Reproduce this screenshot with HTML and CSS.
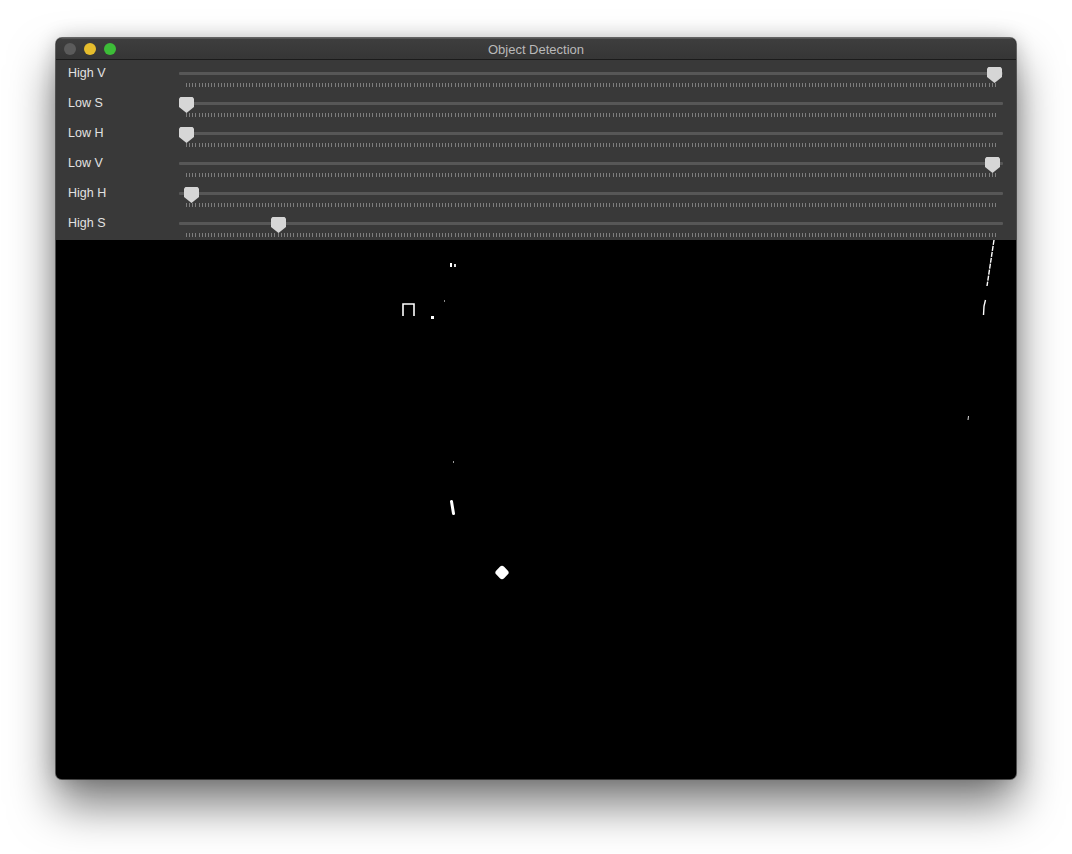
FILE: index.html
```html
<!DOCTYPE html>
<html lang="en">
<head>
<meta charset="utf-8">
<title>Object Detection</title>
<link rel="stylesheet" href="styles.css">
</head>
<body>
<div class="window">
  <div class="titlebar">
    <div class="lights">
      <span class="light light-close"></span>
      <span class="light light-min"></span>
      <span class="light light-max"></span>
    </div>
    <div class="title">Object Detection</div>
  </div>
  <div class="panel">
    <div class="row">
      <div class="label">High V</div>
      <div class="slider"><div class="track"></div><div class="ticks"></div><div class="thumb" style="left:808px"></div></div>
    </div>
    <div class="row">
      <div class="label">Low S</div>
      <div class="slider"><div class="track"></div><div class="ticks"></div><div class="thumb" style="left:0px"></div></div>
    </div>
    <div class="row">
      <div class="label">Low H</div>
      <div class="slider"><div class="track"></div><div class="ticks"></div><div class="thumb" style="left:0px"></div></div>
    </div>
    <div class="row">
      <div class="label">Low V</div>
      <div class="slider"><div class="track"></div><div class="ticks"></div><div class="thumb" style="left:806px"></div></div>
    </div>
    <div class="row">
      <div class="label">High H</div>
      <div class="slider"><div class="track"></div><div class="ticks"></div><div class="thumb" style="left:5px"></div></div>
    </div>
    <div class="row">
      <div class="label">High S</div>
      <div class="slider"><div class="track"></div><div class="ticks"></div><div class="thumb" style="left:92px"></div></div>
    </div>
  </div>
  <div class="canvas">
    <svg class="mask" width="960" height="539" viewBox="0 0 960 539">
      <rect x="394" y="23" width="2" height="4" fill="#fff"/>
      <rect x="398" y="24" width="2" height="3" fill="#ddd"/>
      <path d="M347 76 V64 H358 V76" fill="none" stroke="#fff" stroke-width="1.6"/>
      <rect x="375" y="76" width="3" height="3" fill="#fff"/>
      <rect x="388" y="60" width="1" height="2" fill="#888"/>
      <line x1="938" y1="0" x2="931" y2="46" stroke="#fff" stroke-width="1.4" stroke-dasharray="5 1"/>
      <path d="M929.5 60 L928 66 L927.5 75" fill="none" stroke="#fff" stroke-width="1.4"/>
      <line x1="912.5" y1="176" x2="912" y2="180" stroke="#ddd" stroke-width="1"/>
      <rect x="397" y="221" width="1" height="2" fill="#999"/>
      <line x1="395.5" y1="261.5" x2="397.5" y2="273.5" stroke="#fff" stroke-width="3" stroke-linecap="round"/>
      <rect x="-5.5" y="-5.5" width="11" height="11" rx="3" fill="#fff" transform="translate(446 332.5) rotate(45)"/>
    </svg>
  </div>
</div>
</body>
</html>
```
FILE: styles.css
```css
html, body {
  margin: 0;
  padding: 0;
  background: #ffffff;
}

body {
  width: 1072px;
  height: 854px;
  overflow: hidden;
  font-family: "Liberation Sans", Arial, Helvetica, sans-serif;
}

.window {
  margin: 38px 0 0 56px;
  width: 960px;
  height: 741px;
  display: flex;
  flex-direction: column;
  border-radius: 6px;
  overflow: hidden;
  box-shadow: 0 0 0 1px rgba(0, 0, 0, 0.55), 0 26px 46px rgba(0, 0, 0, 0.52), 0 0 20px rgba(0, 0, 0, 0.2);
  background: #000;
}

.titlebar {
  height: 21px;
  flex: 0 0 21px;
  position: relative;
  display: flex;
  align-items: center;
  justify-content: center;
  background: linear-gradient(#3e3e3e, #363636);
  border-bottom: 1px solid #1b1b1b;
  box-shadow: inset 0 1px 0 rgba(255, 255, 255, 0.12);
}

.lights {
  position: absolute;
  left: 8px;
  top: 5px;
  display: flex;
  gap: 8px;
}

.light {
  width: 12px;
  height: 12px;
  border-radius: 50%;
  display: block;
}

.light-close { background: #5b5b5b; }
.light-min { background: #e6bd2d; }
.light-max { background: #3dbd38; }

.title {
  color: #b9b9b9;
  font-size: 13px;
  line-height: 21px;
  padding-top: 1px;
}

.panel {
  background: #393939;
  display: flex;
  flex-direction: column;
  flex: 0 0 180px;
}

.row {
  height: 30px;
  display: flex;
  padding: 0 13px 0 12px;
}

.label {
  width: 111px;
  flex: 0 0 111px;
  color: #e2e2e2;
  font-size: 12.5px;
  line-height: 14px;
  padding-top: 6px;
}

.slider {
  position: relative;
  flex: 1;
  display: flex;
  flex-direction: column;
  padding-top: 12px;
}

.track {
  height: 3px;
  background: #575757;
  border-radius: 1px;
}

.ticks {
  margin: 8px 7px 0 7px;
  height: 4px;
  background: repeating-linear-gradient(90deg, #7d7d7d 0 1px, transparent 1px 3.16px);
}

.thumb {
  position: absolute;
  top: 7px;
  width: 15px;
  height: 16px;
  background: #d6d6d6;
  clip-path: polygon(0 10%, 10% 0, 90% 0, 100% 10%, 100% 62%, 50% 100%, 0 62%);
}

.canvas {
  flex: 1;
  background: #000;
  position: relative;
}

.mask {
  display: block;
}
```
